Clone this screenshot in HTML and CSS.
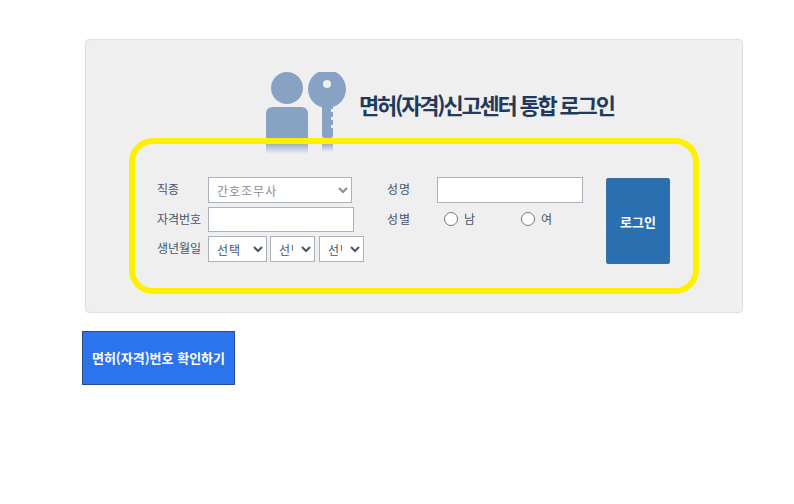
FILE: index.html
```html
<!DOCTYPE html>
<html lang="ko">
<head>
    <meta charset="UTF-8">
    <meta name="viewport" content="width=device-width, initial-scale=1.0">
    <title>면허(자격)신고센터 통합 로그인</title>
    <link rel="stylesheet" href="styles.css">
</head>
<body>
    <div class="login-panel">
        <div class="login-header">
            <svg class="login-icon" width="82" height="82" viewBox="0 0 82 82" aria-hidden="true">
                <defs>
                    <linearGradient id="shine" x1="0" y1="0" x2="0" y2="1">
                        <stop offset="0" stop-color="#9fb0c6"/>
                        <stop offset="1" stop-color="#efeff0"/>
                    </linearGradient>
                </defs>
                <circle cx="21" cy="16" r="16" fill="#88a2c3"/>
                <path d="M0 72V42q0-7 7-7h28q7 0 7 7v30z" fill="#88a2c3"/>
                <circle cx="61" cy="17" r="19" fill="#88a2c3"/>
                <circle cx="61" cy="12" r="4" fill="#efeff0"/>
                <path d="M56 30h11v7h-2v3h2v5h-2v3h2v5h-2v3h2v7q0 3-3 3h-5q-3 0-3-3z" fill="#88a2c3"/>
                <rect x="0" y="72" width="42" height="10" fill="url(#shine)"/>
                <rect x="56" y="72" width="11" height="8" fill="url(#shine)"/>
            </svg>
            <h1 class="login-title">면허(자격)신고센터 통합 로그인</h1>
        </div>
        <div class="login-box">
            <div class="form-grid">
                <label class="field-label">직종</label>
                <select class="field-job">
                    <option>간호조무사</option>
                </select>
                <label class="field-label field-label-side">성명</label>
                <input type="text" class="field-name">

                <label class="field-label">자격번호</label>
                <input type="text" class="field-license">
                <label class="field-label field-label-side">성별</label>
                <div class="gender-row">
                    <label class="radio-item"><input type="radio" name="gender">남</label>
                    <label class="radio-item"><input type="radio" name="gender">여</label>
                </div>

                <label class="field-label">생년월일</label>
                <div class="birth-row">
                    <select class="birth-year"><option>선택</option></select>
                    <select class="birth-small"><option>선택</option></select>
                    <select class="birth-small"><option>선택</option></select>
                </div>
            </div>
            <button class="login-button">로그인</button>
        </div>
    </div>
    <button class="check-button">면허(자격)번호 확인하기</button>
</body>
</html>
```

FILE: styles.css
```css
body {
    margin: 0;
    padding: 39px 0 0 82px;
    background-color: #fff;
    font-family: "Noto Sans CJK KR", "Noto Sans", sans-serif;
    color: #46546a;
}

.login-panel {
    box-sizing: border-box;
    width: 658px;
    height: 274px;
    margin-left: 3px;
    padding: 32px 43px 0;
    background-color: #efeff0;
    border: 1px solid #dfdfdf;
    border-radius: 4px;
}

.login-header {
    display: flex;
    align-items: flex-start;
    height: 66px;
    padding-left: 137px;
}

.login-icon {
    flex-shrink: 0;
}

.login-title {
    margin: 16px 0 0 11px;
    font-size: 22px;
    line-height: 32px;
    font-weight: 700;
    letter-spacing: -2.2px;
    color: #1f3a5c;
    white-space: nowrap;
}

.login-box {
    position: relative;
    box-sizing: border-box;
    display: flex;
    align-items: flex-start;
    width: 570px;
    height: 156px;
    padding: 33px 0 0 22px;
    border: 6px solid #fff000;
    border-radius: 24px;
}

.form-grid {
    display: grid;
    grid-template-columns: 51px 156px 73px 146px;
    grid-template-rows: 26px 25px 26px;
    row-gap: 4px;
    align-items: center;
}

.field-label {
    margin-bottom: 2px;
    font-size: 12px;
    line-height: 16px;
    white-space: nowrap;
}

.field-label-side {
    margin-left: 23px;
    letter-spacing: 1px;
}

.form-grid select,
.form-grid input[type="text"] {
    box-sizing: border-box;
    margin: 0;
    height: 100%;
    background-color: #fff;
    border: 1px solid #a9b2bd;
    border-radius: 0;
    font-family: inherit;
    font-size: 12px;
}

.field-job {
    width: 144px;
    padding-left: 4px;
    color: #8d8d8d;
    letter-spacing: 1px;
}

.field-license,
.field-name {
    width: 146px;
    padding: 0 4px;
}

.gender-row {
    display: flex;
    margin-bottom: 2px;
    padding-left: 7px;
}

.radio-item {
    display: flex;
    align-items: center;
    flex: 0 0 62px;
    font-size: 12px;
}

.radio-item:first-child {
    flex-basis: 77px;
}

.radio-item input {
    width: 14px;
    height: 14px;
    margin: 1px 6px 0 0;
}

.birth-row {
    display: flex;
    gap: 3px;
    height: 26px;
}

.birth-row select {
    padding: 0 5px 0 4px;
    color: #46546a;
    letter-spacing: 1px;
}

.birth-year {
    width: 59px;
}

.birth-small {
    width: 45px;
}

.birth-small + .birth-small {
    margin-left: 1px;
}

.login-button {
    width: 64px;
    height: 86px;
    margin: 1px 0 0 23px;
    padding: 0;
    background-color: #2a70b0;
    border: 1px solid #3e6f9e;
    border-radius: 2px;
    color: #fff;
    font-family: inherit;
    font-size: 13px;
    font-weight: 700;
}

.check-button {
    display: block;
    box-sizing: border-box;
    width: 153px;
    height: 54px;
    margin-top: 18px;
    padding: 0 0 2px;
    background-color: #2b74ee;
    border: 1px solid #27508f;
    color: #fff;
    font-family: inherit;
    font-size: 13px;
    font-weight: 700;
    white-space: nowrap;
}
```
